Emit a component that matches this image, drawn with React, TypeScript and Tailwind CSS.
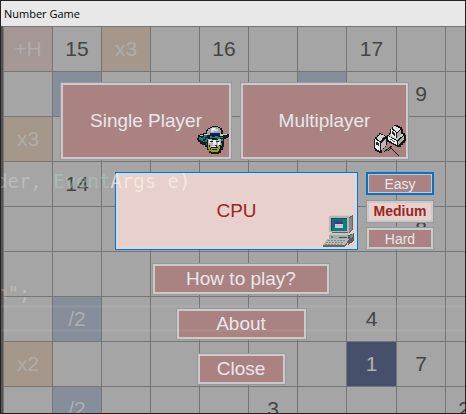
import { useState, type ReactNode } from "react";
import { clsx } from "clsx";

type Cell = { text?: string; tone?: "red" | "orange" | "blue" | "active" };

const COLUMNS = 12;

const board: Record<number, Cell>[] = [
  { 0: { text: "+H", tone: "red" }, 1: { text: "15" }, 2: { text: "x3", tone: "orange" }, 4: { text: "16" }, 7: { text: "17" } },
  { 1: { tone: "blue" }, 6: { tone: "blue" }, 8: { text: "9" } },
  { 0: { text: "x3", tone: "orange" } },
  { 1: { text: "14" } },
  { 8: { text: "8" } },
  {},
  { 1: { text: "/2", tone: "blue" }, 7: { text: "4" } },
  { 0: { text: "x2", tone: "orange" }, 7: { text: "1", tone: "active" }, 8: { text: "7" } },
  { 1: { text: "/2", tone: "blue" }, 5: { text: "3" }, 9: { text: "23" } },
  {},
];

const tones = {
  red: "bg-[#a69797] text-[#b0acac]",
  orange: "bg-[#a5988b] text-[#aeacaa]",
  blue: "bg-[#868e9b] text-[#adadad]",
  active: "bg-[#46506a] text-[#b0b0b0]",
};

function Board() {
  return (
    <table className="w-[590px] table-fixed border-separate border-spacing-0 border-t border-l border-[#757575] bg-[#a5a5a5] text-[21px] leading-6 text-[#444]">
      <tbody>
        {board.map((row, r) => (
          <tr key={r}>
            {Array.from({ length: COLUMNS }, (_, c) => {
              const cell = row[c];
              return (
                <td
                  key={c}
                  className={clsx(
                    "h-[45px] border-r border-b border-[#757575] p-0 text-center align-middle",
                    c === 7 ? "w-[50px]" : "w-[49px]",
                    cell?.tone && tones[cell.tone],
                  )}
                >
                  {cell?.text}
                </td>
              );
            })}
          </tr>
        ))}
      </tbody>
    </table>
  );
}

function ManIcon() {
  return (
    <svg viewBox="0 0 33 30" className="absolute right-0 bottom-[2px] h-[30px] w-[33px]" shapeRendering="crispEdges" aria-hidden="true">
      <path d="M2 10h2V9h3V8h3V5h1V4h1V3h2V2h2V1h6v1h2v1h2v2h1v4h6v1h1v2h-2v1h-2v1h-2v8h-1v3h-2v3h-2v1h-8v-1h-2v-3h-2v-3H9v-2H6v-1H4v-2H2v-2H1v-2h1z" fill="#1a1a1a" />
      <path d="M11 6h1V4h2V3h2V2h6v1h2v2h1v4h-3V8h-8v2h-3z" fill="#a4a4a4" />
      <path d="M15 3h5v1h2v2h-4v1h-3z" fill="#d4d4d4" />
      <path d="M16 3h3v2h-3z" fill="#f2f2f2" />
      <path d="M15 8h9v2H14V9h1z" fill="#15158f" />
      <path d="M8 9h4v1H8zM24 9h7v1h-4v1h-3zM4 10h3v1H4z" fill="#c9c9c9" />
      <path d="M3 12h2v1h2v-1h2v2H7v2H5v-1H3zM8 10h3v2H8zM10 13h2v2h-1v2H9v-2h1zM7 16h2v1H7zM10 18h1v2h-1z" fill="#1b7b80" />
      <path d="M14 11h2v1h3v-1h3v1h5v1h-3v1h-3v-1h-7z" fill="#1c8588" />
      <path d="M12 14h4v1h6v-1h3v6h-2v2h-2v-1h-4v1h-3v-2h-2z" fill="#b4b4b4" />
      <path d="M13 15h2v3h-2zM17 15h3v5h-3zM22 17h2v3h-2z" fill="#ececec" />
      <path d="M14 16h3v1h-3zM20 16h3v1h-3zM19 20h2v1h-2z" fill="#222" />
      <path d="M12 20h1v2h2v1h7v-2h2v3h-1v2h-1v1h-7v-1h-2v-2h-1z" fill="#a0992c" />
      <path d="M16 21h4v1h-4z" fill="#f0f0f0" />
      <path d="M16 24h5v1h-5zM14 23h1v2h-1z" fill="#2b2a14" />
      <path d="M25 14h2v2h-2zM25 18h1v3h-1z" fill="#158f94" />
    </svg>
  );
}

function NetworkIcon() {
  return (
    <svg viewBox="0 0 33 32" className="absolute right-0 bottom-0 h-[32px] w-[33px]" shapeRendering="crispEdges" aria-hidden="true">
      <path d="M11 27l8-6M18 23l8 8M15 26l3-3" fill="none" stroke="#151515" />
      <path d="M1 14h1v-2h2v-2h2V8h2v1h2v1h2v1h2v9h-1v2h-2v2h-2v2H9v2H6v-1H4v-1H2v-2H1z" fill="#151515" />
      <path d="M2 14l5 3v9l-5-3z" fill="#ededed" />
      <path d="M8 18l5-5v7l-5 5z" fill="#b9b9b9" />
      <path d="M3 13l4-4 5 2-5 5z" fill="#d6d6d6" />
      <path d="M3 17l3 1v3l-3-1z" fill="#2a2a2a" />
      <path d="M9 14l2-2M10 16l2-2" stroke="#333" />
      <path d="M14 10h2V8h1V4h2V2h2V0h4v1h2v1h2v2h1v4h2v2h1v6h-1v2h-2v2h-2v2h-4v-1h-2v-1h-2v-1h-2v-1h-2v-1h-2z" fill="#151515" />
      <path d="M15 11l9 5v4l-9-5z" fill="#ededed" />
      <path d="M25 16l6-5v4l-6 5z" fill="#adadad" />
      <path d="M17 9l7 4 5-4 2 1-7 5-8-4z" fill="#c9c9c9" />
      <path d="M18 4l5 3v6l-5-3z" fill="#f0f0f0" />
      <path d="M19 6l3 2v3l-3-2z" fill="#2a2a2a" />
      <path d="M19 3l3-2 6 3-4 3z" fill="#e2e2e2" />
      <path d="M24 8l4-4v5l-4 4z" fill="#a9a9a9" />
      <path d="M17 14l5 3" stroke="#555" />
    </svg>
  );
}

function ComputerIcon() {
  return (
    <svg viewBox="0 0 33 33" className="absolute right-0 bottom-0 h-[33px] w-[33px]" shapeRendering="crispEdges" aria-hidden="true">
      <path d="M26 3l5-2v15l-5 4z" fill="#62676a" />
      <path d="M27 4l3-1v12l-3 3z" fill="#85898a" />
      <path d="M8 1h23l-4 2H8z" fill="#cfd0ce" />
      <path d="M7 2h20v17l-20-1z" fill="#b4b6b3" />
      <path d="M9 4h16v13H9z" fill="#0a7f7d" />
      <path d="M9 4h16v1H10v12H9z" fill="#2c4346" />
      <path d="M11 6h9v7h-9z" fill="#2e5097" />
      <path d="M13 8h8v6h-8z" fill="#c7cbe0" />
      <path d="M13 8h8v2h-8z" fill="#2b4292" />
      <path d="M14 11h3v1h-3zM18 11h2v1h-2z" fill="#e0c263" />
      <path d="M10 18h16v2H10z" fill="#5c6265" />
      <path d="M7 20h19v7H7z" fill="#a9aca9" />
      <path d="M7 20l2-1h20l-3 2H7z" fill="#c4c6c3" />
      <path d="M26 21l6-2v8l-6 4z" fill="#585d60" />
      <path d="M28 21l3-1v3l-3 1z" fill="#7f8385" />
      <path d="M9 22h2v2H9z" fill="#2fae45" />
      <path d="M17 23h8v1h-8z" fill="#4a4e50" />
      <path d="M5 25h22l-4 6H1z" fill="#b9bab5" />
      <path d="M1 31h22l4-6v2l-4 6H1z" fill="#62676a" />
      <path d="M6 26.5h18M4 28.5h18M3 30.5h18" stroke="#858a88" strokeDasharray="2 1" />
    </svg>
  );
}

type MenuButtonProps = {
  children: ReactNode;
  className: string;
  selected?: boolean;
  frame?: "plain" | "current" | "focused";
  onClick?: () => void;
};

const frames = {
  plain: { outer: "border border-[#999]", inner: "border-2 border-[#cacaca]" },
  current: { outer: "border border-[#0873c4]", inner: "border-2 border-[#cfdce8]" },
  focused: { outer: "border-2 border-[#0873c4]", inner: "border border-[#c4c8d0]" },
};

function MenuButton({ children, className, selected, frame = "plain", onClick }: MenuButtonProps) {
  return (
    <button type="button" onClick={onClick} className={clsx("shrink-0", frames[frame].outer, className)}>
      <span
        className={clsx(
          "relative flex size-full items-center justify-center",
          frames[frame].inner,
          selected ? "bg-[#e8d0cc] text-[#9c2424]" : "bg-[#aa8282] text-[#e8e8e8]",
        )}
      >
        {children}
      </span>
    </button>
  );
}

const levels = ["Easy", "Medium", "Hard"];

export default function App() {
  const [level, setLevel] = useState("Medium");

  return (
    <div className="relative flex h-screen flex-col overflow-hidden border border-[#252122] bg-[#a5a5a5] font-['Liberation_Sans',Arial,sans-serif]">
      <header className="flex h-[25px] shrink-0 items-center bg-[#e8e8e8] px-[3px] font-['Open_Sans','Noto_Sans',sans-serif] text-[11px] leading-4 text-black">
        Number Game
      </header>

      <div className="grid min-h-0 flex-1 grid-cols-1 overflow-hidden border-l-2 border-[#555]">
        <div className="col-start-1 row-start-1 min-h-0 overflow-hidden">
          <Board />
        </div>

        <main className="relative col-start-1 row-start-1 mx-auto flex w-[400px] flex-col gap-[13px] pt-14 pl-[26px] text-[19px] leading-6">
          <div className="flex flex-col gap-3">
            <div className="flex gap-2">
              <MenuButton className="h-[78px] w-[172px]">
                Single Player
                <ManIcon />
              </MenuButton>
              <MenuButton className="h-[78px] w-[169px]">
                Multiplayer
                <NetworkIcon />
              </MenuButton>
            </div>
            <div className="flex justify-end gap-2">
              <MenuButton selected frame="current" className="h-[78px] w-[243px]">
                CPU
                <ComputerIcon />
              </MenuButton>
              <div className="flex flex-col justify-between text-[14px] leading-4">
                {levels.map((name) => (
                  <MenuButton
                    key={name}
                    selected={name === level}
                    frame={name === "Easy" ? "focused" : "plain"}
                    onClick={() => setLevel(name)}
                    className={clsx("h-[23px] w-[68px]", name === level && "font-bold")}
                  >
                    {name}
                  </MenuButton>
                ))}
              </div>
            </div>
          </div>

          <nav className="flex w-[362px] flex-col items-center gap-[13px]">
            <MenuButton className="h-8 w-[178px]">How to play?</MenuButton>
            <MenuButton className="h-8 w-[131px]">About</MenuButton>
            <MenuButton className="h-8 w-[89px]">Close</MenuButton>
          </nav>
        </main>
      </div>

      <div className="pointer-events-none absolute inset-0 overflow-hidden font-['DejaVu_Sans_Mono','Liberation_Mono',monospace] text-[19px] leading-6 whitespace-pre text-white/25">
        <p className="absolute top-[168px] -left-[5px]">
          der, <span className="text-[#a8dccb]/40">Event</span>
          <span className="text-[#fbf0e4]/70">Args e)</span>
        </p>
        <p className="absolute top-[280px] -left-[5px]">
          <span className="text-[#e0a890]/40">n</span>
          <span className="text-[#e8c8b8]/50">"</span>;
        </p>
        <div className="absolute inset-x-0 top-[304px] h-[3px] bg-white/5" />
        <div className="absolute inset-x-0 top-[328px] h-[3px] bg-white/5" />
      </div>
    </div>
  );
}
